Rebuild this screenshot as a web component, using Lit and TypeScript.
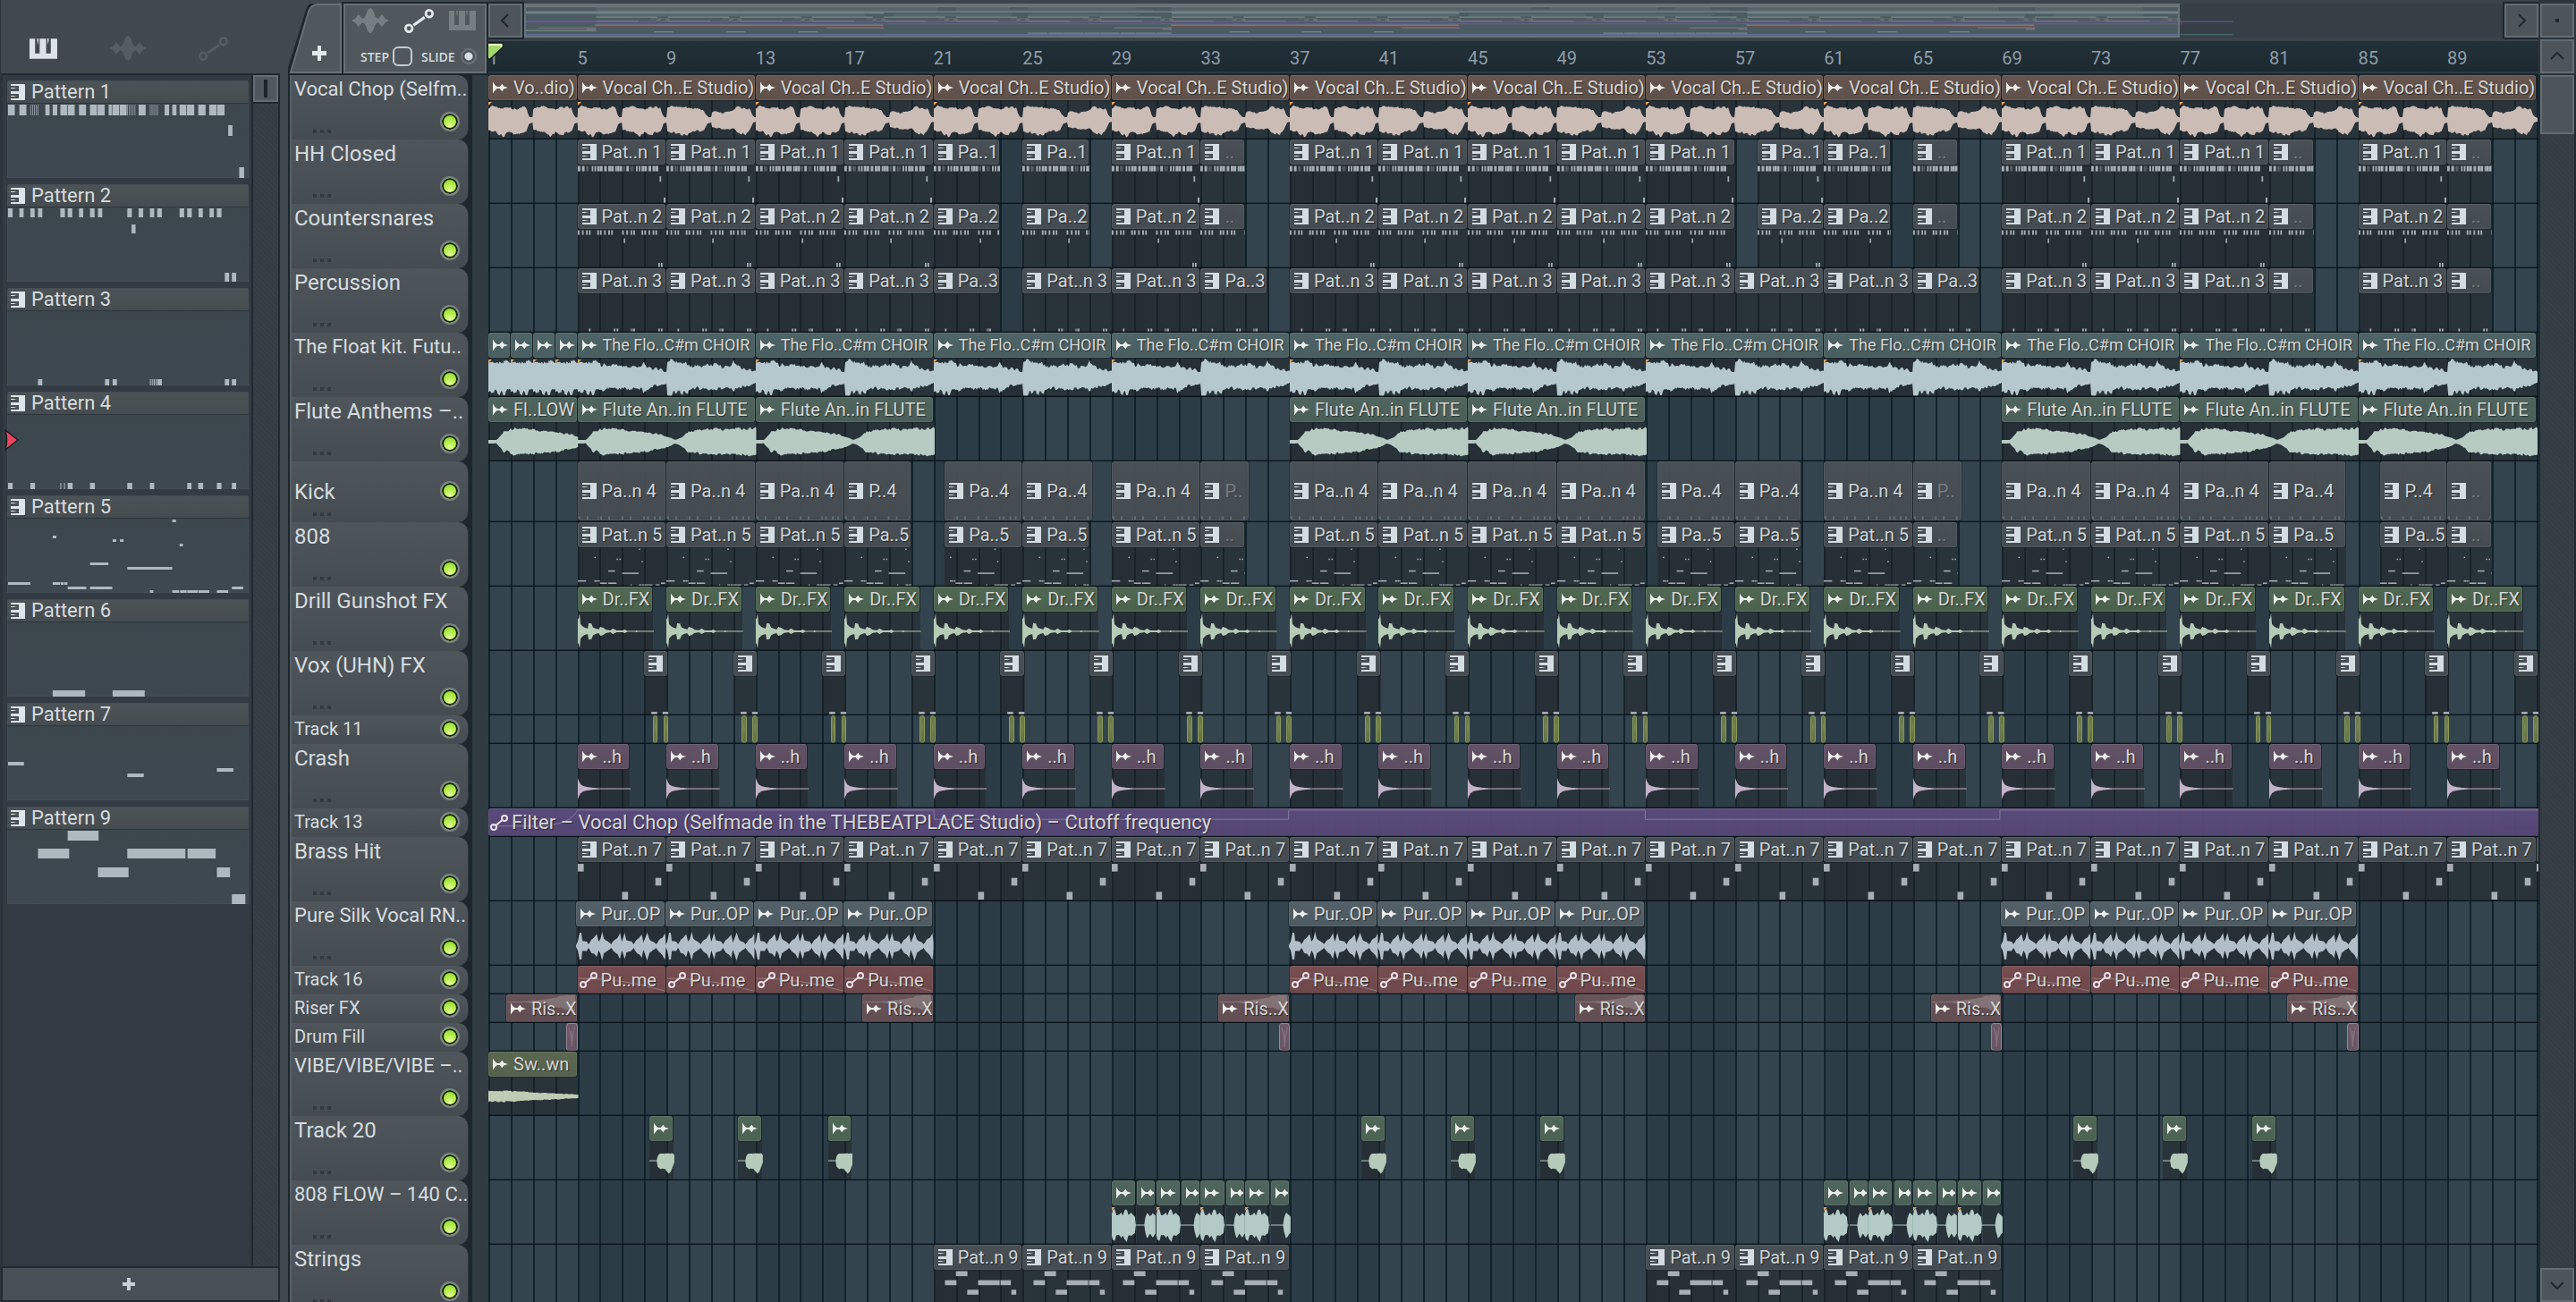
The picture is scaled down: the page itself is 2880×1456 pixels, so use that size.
import { LitElement, html, css, svg, nothing } from "lit";
import { customElement, state } from "lit/decorators.js";
import { classMap } from "lit/directives/class-map.js";
import { styleMap } from "lit/directives/style-map.js";

/* ---------- timeline geometry ---------- */
const VISIBLE_BARS = 92.095;
const BAR = 25;
const pct = (bars: number) => `${(bars / VISIBLE_BARS) * 100}%`;

/* ---------- note data: [x, width, y, height] on a 784 x 83 sheet of four bars ---------- */
type Note = [number, number, number, number];
const row = (y: number, h: number, xs: [number, number][]): Note[] =>
  xs.map(([a, b]) => [a - 23, b - a, y, h] as Note);
const thin = (from: number, to: number, y: number, h: number): Note[] => {
  const out: Note[] = [];
  for (let x = from; x < to; x += 6) out.push([x - 23, 2, y, h]);
  return out;
};

const NOTES: Record<string, Note[]> = {
  p1: [
    ...row(1, 12, [
      [23, 45], [60, 83], [145, 159], [169, 184], [194, 216], [218, 241], [255, 278],
      [291, 314], [316, 339], [352, 362], [364, 386], [388, 411], [450, 473],
      [535, 550], [560, 574], [584, 606], [608, 632], [645, 669], [681, 705], [707, 731],
    ]),
    ...thin(96, 126, 1, 12), ...thin(413, 442, 1, 12), ...thin(487, 515, 1, 12),
    ...row(24, 12, [[743, 757]]),
    ...row(71, 12, [[779, 795]]),
  ],
  p2: [
    ...row(1, 10, [
      [23, 38], [60, 74], [96, 110], [121, 135], [194, 209], [218, 233], [255, 269],
      [291, 306], [317, 331], [413, 428], [450, 465], [487, 501], [511, 526],
      [584, 599], [609, 624], [646, 660], [682, 696], [706, 721],
    ]),
    ...row(19, 10, [[427, 440]]),
    ...row(73, 10, [[732, 746], [755, 769]]),
  ],
  p3: row(76, 7, [
    [121, 135], [340, 354], [365, 379], [487, 490], [493, 496], [499, 503],
    [506, 510], [512, 526], [732, 746], [755, 769],
  ]),
  p4: row(76, 7, [
    [23, 38], [96, 111], [194, 197], [206, 209], [218, 234], [291, 307], [413, 429],
    [487, 501], [609, 623], [645, 661], [706, 721], [755, 769],
  ]),
  p5: [
    ...row(1, 3, [[560, 572]]),
    ...row(19, 3, [[169, 181]]),
    ...row(23, 3, [[365, 377], [389, 401]]),
    ...row(28, 3, [[584, 595]]),
    ...row(49, 3, [[291, 351]]),
    ...row(54, 3, [[413, 560]]),
    ...row(71, 3, [[23, 96], [169, 193], [195, 205], [207, 217]]),
    ...row(76, 3, [[218, 279], [291, 364], [755, 792]]),
    ...row(80, 3, [[487, 498], [560, 583], [586, 607], [609, 644], [646, 681], [706, 743]]),
  ],
  p6: row(76, 7, [[169, 275], [365, 470]]),
  p7: [
    ...row(40, 4, [[23, 75]]),
    ...row(53, 4, [[413, 467]]),
    ...row(47, 4, [[706, 760]]),
  ],
  p9: [
    ...row(1, 11, [[218, 319]]),
    ...row(21, 11, [[121, 223], [413, 603], [610, 702]]),
    ...row(42, 11, [[317, 417], [706, 749]]),
    ...row(72, 11, [[755, 799]]),
  ],
  brass: [
    ...row(2, 17, [[23, 75]]),
    ...row(64, 17, [[413, 465]]),
    ...row(33, 17, [[706, 758]]),
  ],
  vox: [[652, 52, 77, 6], [752, 52, 77, 6]],
};

/* ---------- audio envelopes: [x, level] key points, 25 units per bar ---------- */
type Pt = [number, number];
const ENV: Record<string, { top: Pt[]; bottom?: Pt[]; rough: number }> = {
  vocal: {
    rough: 0.16,
    top: [
      [0, 12], [4, 16], [8, 15], [13, 13], [25, 13], [31, 11], [38, 14], [42, 13], [44, 7], [46, 3], [49, 3],
      [50, 13], [59, 16], [68, 13], [75, 12], [82, 15], [92, 13], [94, 7], [97, 3], [99, 3],
      [100, 14], [112, 15], [126, 14], [140, 11], [143, 6], [146, 3], [149, 3],
      [150, 9], [162, 8], [173, 10], [178, 14], [188, 13], [192, 12], [195, 6], [197, 3], [200, 2],
    ],
    bottom: [
      [0, 12], [8, 14], [16, 18], [24, 14], [34, 16], [42, 14], [45, 5], [49, 3],
      [50, 12], [60, 13], [70, 18], [76, 13], [82, 17], [93, 12], [96, 4], [99, 3],
      [100, 12], [112, 16], [120, 17], [130, 13], [141, 12], [145, 4], [149, 3],
      [150, 8], [165, 11], [174, 10], [180, 15], [188, 16], [193, 9], [196, 3], [200, 2],
    ],
  },
  choir: {
    rough: 0.3,
    top: [
      [0, 17], [20, 17], [25, 14], [35, 12], [48, 14], [66, 12], [71, 12], [74, 18], [77, 12], [90, 9], [99, 7],
      [100, 18], [120, 17], [126, 14], [136, 12], [148, 14], [166, 12], [171, 12], [174, 18], [177, 12], [190, 9], [200, 6],
    ],
  },
  flute: {
    rough: 0.18,
    top: [
      [0, 2], [9, 2], [12, 5], [17, 11], [22, 11], [25, 14], [48, 14], [50, 16], [53, 13], [75, 11], [97, 7],
      [104, 4], [109, 2], [116, 5], [124, 12], [148, 14], [170, 14], [200, 15],
    ],
  },
  shot: {
    rough: 0.1,
    top: [
      [0, 13], [1, 15], [2, 20], [3, 8], [6, 5], [11, 3], [12, 9], [15, 9], [17, 4], [23, 2], [25, 5], [28, 4],
      [31, 2], [36, 1], [39, 3], [43, 1], [50, 1], [52, 2], [55, 0.6], [64, 0.6], [65, 1], [67, 0.5], [100, 0.5],
    ],
  },
  crash: {
    rough: 0.04,
    top: [[0, 12], [1, 9], [3, 5], [6, 3], [10, 2], [17, 1], [25, 0.5], [100, 0.5]],
  },
  silk: {
    rough: 0.12,
    top: [
      [0, 1], [2, 5], [4, 15], [6, 15], [7, 6], [12, 5], [14, 2], [17, 7], [20, 9], [23, 13], [25, 5], [27, 8],
      [29, 15], [31, 8], [37, 4], [39, 2], [42, 6], [46, 9], [49, 15], [51, 5], [54, 15], [56, 7], [62, 5],
      [64, 2], [67, 7], [70, 9], [73, 13], [75, 4], [79, 15], [82, 7], [87, 4], [89, 2], [92, 6], [96, 10], [99, 15], [100, 4],
    ],
  },
  vibe: { rough: 0.2, top: [[0, 6], [20, 6], [60, 4], [100, 2]] },
  hit: {
    rough: 0.06,
    top: [[0, 0.5], [8, 0.5], [9, 5], [11, 8], [26, 8], [28, 4]],
    bottom: [[0, 0.5], [8, 0.5], [9, 7], [12, 9], [17, 9], [21, 15], [23, 13], [27, 2]],
  },
  flow: {
    rough: 0.12,
    top: [[0, 12], [1, 17], [3, 18], [5, 11], [8, 12], [10, 14], [12, 11], [14, 17], [16, 18], [18, 11], [21, 13], [25, 9], [26, 0.5], [60, 0.5]],
  },
  flowA: { rough: 0.1, top: [[0, 0.5], [8, 0.5], [9, 8], [11, 14], [14, 10], [17, 13], [21, 9]] },
  flowB: { rough: 0.1, top: [[0, 0.5], [13, 0.5], [14, 8], [16, 14], [21, 9]] },
  riser: { rough: 0.3, top: [[0, 0.4], [20, 0.6], [40, 2], [60, 6], [70, 8], [78, 11], [80, 0.5]] },
};

const level = (pts: Pt[], x: number) => {
  for (let i = 1; i < pts.length; i++) {
    if (x <= pts[i][0]) {
      const [x0, y0] = pts[i - 1];
      const [x1, y1] = pts[i];
      return y0 + ((y1 - y0) * (x - x0)) / (x1 - x0 || 1);
    }
  }
  return pts[pts.length - 1][1];
};
const hash = (n: number) => {
  const v = Math.sin(n * 12.9898) * 43758.5453;
  return v - Math.floor(v) - 0.5;
};
const jitter = (n: number) => 0.5 * hash(n) + 0.8 * hash(Math.floor(n / 3) + 500);
const cache = new Map<string, string>();
const wavePath = (kind: string, bars: number) => {
  const key = `${kind}:${bars}`;
  const known = cache.get(key);
  if (known) return known;
  const e = ENV[kind];
  const end = bars * BAR;
  const up: string[] = [];
  const down: string[] = [];
  for (let x = 0; x <= end; x += 1) {
    const a = level(e.top, x) * (1 + e.rough * 1.2 * jitter(x + 1));
    const b = level(e.bottom ?? e.top, x) * (1 + e.rough * 1.2 * jitter(x + 77));
    up.push(`${x} ${(21 - a).toFixed(1)}`);
    down.unshift(`${x} ${(21 + b).toFixed(1)}`);
  }
  const d = `M${up.join("L")}L${down.join("L")}Z`;
  cache.set(key, d);
  return d;
};

/* ---------- arrangement ---------- */
interface Clip { at: number; len: number; text?: string; dim?: boolean; wave?: string; mark?: boolean }
interface Track {
  name: string;
  size: "tall" | "mid" | "slim";
  tight?: boolean;
  kind: "audio" | "pattern" | "auto" | "bare";
  tone: string;
  line: string;
  notes?: string;
  wave?: string;
  tightLabel?: boolean;
  clips: Clip[];
}
const every = (from: number, to: number, step: number, len: number, text?: string): Clip[] => {
  const out: Clip[] = [];
  for (let at = from; at <= to; at += step) out.push({ at, len, text });
  return out;
};
const at = (start: number, len: number, text?: string, dim = false): Clip => ({ at: start, len, text, dim });

const hats = (n: number): Clip[] => [
  ...every(4, 16, 4, 4, `Pat..n ${n}`),
  at(20, 3, `Pa..${n}`), at(24, 3, `Pa..${n}`), at(28, 4, `Pat..n ${n}`), at(32, 2, "..", true),
  ...every(36, 52, 4, 4, `Pat..n ${n}`),
  at(57, 3, `Pa..${n}`), at(60, 3, `Pa..${n}`), at(64, 2, "..", true),
  ...every(68, 76, 4, 4, `Pat..n ${n}`), at(80, 2, "..", true),
  at(84, 4, `Pat..n ${n}`), at(88, 2, "..", true),
];
const flowGroup = (b: number): Clip[] => [
  { at: b, len: 1.1, mark: true }, { at: b + 1.15, len: 0.83, wave: "flowA" },
  { at: b + 2, len: 1.1, mark: true }, { at: b + 3.15, len: 0.83, wave: "flowB" },
  { at: b + 4, len: 1.1, mark: true }, { at: b + 5.15, len: 0.83, wave: "flowA" },
  { at: b + 6, len: 1.1, mark: true }, { at: b + 7.15, len: 0.85, wave: "flowB" },
];
const marked = (list: Clip[]) => list.map((c) => ({ ...c, mark: true }));
const PAT = { tone: "#4a5156", line: "#a7afb4" };

const TRACKS: Track[] = [
  {
    name: "Vocal Chop (Selfm..", size: "tall", tight: true, kind: "audio", tone: "#68574f", line: "#cbbcb5", wave: "vocal",
    clips: marked([at(0, 4, "Vo..dio)"), ...every(4, 84, 8, 8, "Vocal Ch..E Studio)")]),
  },
  { name: "HH Closed", size: "tall", kind: "pattern", ...PAT, notes: "p1", clips: hats(1) },
  { name: "Countersnares", size: "tall", kind: "pattern", ...PAT, notes: "p2", clips: hats(2) },
  {
    name: "Percussion", size: "tall", kind: "pattern", ...PAT, notes: "p3",
    clips: [
      ...every(4, 16, 4, 4, "Pat..n 3"), at(20, 3, "Pa..3"), ...every(24, 28, 4, 4, "Pat..n 3"), at(32, 3, "Pa..3"),
      ...every(36, 60, 4, 4, "Pat..n 3"), at(64, 3, "Pa..3"), ...every(68, 76, 4, 4, "Pat..n 3"),
      at(80, 2, "..", true), at(84, 4, "Pat..n 3"), at(88, 2, "..", true),
    ],
  },
  {
    name: "The Float kit. Futu..", size: "tall", tight: true, kind: "audio", tone: "#506668", line: "#b5c8ce", wave: "choir", tightLabel: true,
    clips: marked([...every(0, 3, 1, 1), ...every(4, 84, 8, 8, "The Flo..C#m CHOIR")]),
  },
  {
    name: "Flute Anthems –..", size: "tall", kind: "audio", tone: "#51675f", line: "#b7cbc3", wave: "flute",
    clips: [
      at(0, 4, "Fl..LOW"), ...every(4, 12, 8, 8, "Flute An..in FLUTE"),
      ...every(36, 44, 8, 8, "Flute An..in FLUTE"), ...every(68, 84, 8, 8, "Flute An..in FLUTE"),
    ],
  },
  {
    name: "Kick", size: "mid", kind: "pattern", ...PAT, notes: "p4",
    clips: [
      ...every(4, 12, 4, 4, "Pa..n 4"), at(16, 3, "P..4"), at(20.5, 3.5, "Pa..4"), at(24, 3.15, "Pa..4"),
      at(28, 4, "Pa..n 4"), at(32, 2.2, "P..", true), ...every(36, 48, 4, 4, "Pa..n 4"),
      at(52.5, 3.5, "Pa..4"), at(56, 3, "Pa..4"), at(60, 4, "Pa..n 4"), at(64, 2.2, "P..", true),
      ...every(68, 76, 4, 4, "Pa..n 4"), at(80, 3.45, "Pa..4"), at(85, 3, "P..4"), at(88, 2, "..", true),
    ],
  },
  {
    name: "808", size: "tall", kind: "pattern", ...PAT, notes: "p5",
    clips: [
      ...every(4, 12, 4, 4, "Pat..n 5"), at(16, 3, "Pa..5"), at(20.5, 3.5, "Pa..5"), at(24, 3, "Pa..5"),
      at(28, 4, "Pat..n 5"), at(32, 2, "..", true), ...every(36, 48, 4, 4, "Pat..n 5"),
      at(52.5, 3.5, "Pa..5"), at(56, 3, "Pa..5"), at(60, 4, "Pat..n 5"), at(64, 2, "..", true),
      ...every(68, 76, 4, 4, "Pat..n 5"), at(80, 3.45, "Pa..5"), at(85, 3, "Pa..5"), at(88, 2, "..", true),
    ],
  },
  { name: "Drill Gunshot FX", size: "tall", kind: "audio", tone: "#526a52", line: "#b6cab5", wave: "shot", clips: every(4, 88, 4, 3.4, "Dr..FX") },
  { name: "Vox (UHN) FX", size: "tall", kind: "pattern", ...PAT, notes: "vox", clips: every(7, 91, 4, 1.09) },
  {
    name: "Track 11", size: "slim", kind: "bare", tone: "#6d7a48", line: "#8a9a5c",
    clips: [...every(7.38, 92, 4, 0.23), ...every(7.86, 92, 4, 0.23)],
  },
  { name: "Crash", size: "tall", kind: "audio", tone: "#655368", line: "#c3b3c8", wave: "crash", clips: every(4, 88, 4, 2.36, "..h") },
  {
    name: "Track 13", size: "slim", kind: "auto", tone: "#5b4b7d", line: "#9a8bba",
    clips: [at(0, 92.2, "Filter – Vocal Chop (Selfmade in the THEBEATPLACE Studio) – Cutoff frequency")],
  },
  { name: "Brass Hit", size: "tall", kind: "pattern", ...PAT, notes: "brass", clips: [...every(4, 88, 4, 4, "Pat..n 7"), at(92, 0.2)] },
  {
    name: "Pure Silk Vocal RN..", size: "tall", tight: true, kind: "audio", tone: "#55626a", line: "#b2bfc8", wave: "silk",
    clips: [...every(3.95, 15.95, 4, 4, "Pur..OP"), ...every(35.95, 47.95, 4, 4, "Pur..OP"), ...every(67.95, 79.95, 4, 4, "Pur..OP")],
  },
  {
    name: "Track 16", size: "slim", kind: "auto", tone: "#7a4e51", line: "#c08a8c",
    clips: [...every(4, 16, 4, 4, "Pu..me"), ...every(36, 48, 4, 4, "Pu..me"), ...every(68, 80, 4, 4, "Pu..me")],
  },
  {
    name: "Riser FX", size: "slim", kind: "audio", tone: "#6b5459", line: "#b59aa0", wave: "riser",
    clips: [0.8, 16.8, 32.8, 48.8, 64.8, 80.8].map((b) => at(b, 3.2, "Ris..X")),
  },
  {
    name: "Drum Fill", size: "slim", kind: "bare", tone: "#6e5a69", line: "#9b8394",
    clips: [3.5, 35.5, 67.5, 83.5].map((b) => at(b, 0.5)),
  },
  { name: "VIBE/VIBE/VIBE –..", size: "tall", tight: true, kind: "audio", tone: "#5d6a52", line: "#bfccb4", wave: "vibe", clips: [at(0, 4, "Sw..wn")] },
  {
    name: "Track 20", size: "tall", kind: "audio", tone: "#526a59", line: "#b6cab9", wave: "hit",
    clips: [7.22, 11.23, 15.25, 39.22, 43.23, 47.25, 71.22, 75.23, 79.25].map((b) => at(b, 1.08)),
  },
  {
    name: "808 FLOW – 140 C..", size: "tall", tight: true, kind: "audio", tone: "#51685f", line: "#b3cac6", wave: "flow",
    clips: [...flowGroup(28), ...flowGroup(60)],
  },
  {
    name: "Strings", size: "tall", kind: "pattern", ...PAT, notes: "p9",
    clips: [...every(20, 32, 4, 4, "Pat..n 9"), ...every(52, 64, 4, 4, "Pat..n 9")],
  },
];

/* ---------- glyphs ---------- */
const pianoGlyph = (cls: string) => html`<svg class=${cls} viewBox="0 0 30 22" aria-hidden="true">
  <path fill="currentColor" d="M0 0H6V16H11V0H18V16H23V0H30V22H0Z" />
  <path fill="currentColor" d="M8 0H10L9 7Z M19 0H21L20 7Z" />
</svg>`;
const waveGlyph = (cls: string) => html`<svg class=${cls} viewBox="0 0 42 28" aria-hidden="true">
  <path
    fill="currentColor"
    d="M0 14L4 12L8 7L12 12L14 11Q16 9 17 5Q19 0 21 0Q23 0 25 5Q26 9 28 11L30 12L34 7L38 12L42 14L38 16L34 21L30 16L28 17Q26 19 25 23Q23 28 21 28Q19 28 17 23Q16 19 14 17L12 16L8 21L4 16Z"
  />
</svg>`;
const linkGlyph = (cls: string) => html`<svg class=${cls} viewBox="0 0 32 26" aria-hidden="true">
  <g fill="none" stroke="currentColor">
    <circle cx="5" cy="21" r="3.7" stroke-width="2.6" />
    <circle cx="27" cy="5" r="3.7" stroke-width="2.6" />
    <path d="M10 17.5L22 9" stroke-width="3" />
  </g>
</svg>`;
const keysGlyph = html`<svg class="g-keys" viewBox="0 0 16 18" aria-hidden="true">
  <path fill="currentColor" d="M0 0H16V18H0V16H9V11H0V8H9V2H0Z" />
  <path fill="currentColor" d="M0 4H3L7 5H0Z M0 13H3L7 14H0Z" />
</svg>`;
const clipWaveGlyph = html`<svg class="g-clipwave" viewBox="0 0 18 14" aria-hidden="true">
  <path fill="currentColor" d="M0 0Q2 4 5 6H8L11 2.5L13 5.5L18 7L13 8.5L11 11.5L8 8H5Q2 10 0 14Z" />
</svg>`;
const clipLinkGlyph = html`<svg class="g-cliplink" viewBox="0 0 20 18" aria-hidden="true">
  <g fill="none" stroke="currentColor" stroke-width="2">
    <circle cx="4" cy="14" r="3" />
    <circle cx="16" cy="4" r="3" />
    <path d="M7 11.5L13 6.5" />
  </g>
</svg>`;

const noteSheet = (notes: Note[], x: number, w: number, cls: string) => html`<svg
  class=${cls}
  viewBox="${x} 0 ${w} 83"
  preserveAspectRatio="none"
  aria-hidden="true"
>
  ${notes.map((n) => svg`<rect x=${n[0]} y=${n[2]} width=${n[1]} height=${n[3]} fill="currentColor" />`)}
</svg>`;

/* ---------- pattern picker ---------- */
@customElement("pattern-picker")
export class PatternPicker extends LitElement {
  static styles = css`
    :host { display: flex; flex-direction: column; width: 322px; height: 100%; background: #41494f; color: #d6dcdf; font-family: Roboto, sans-serif; box-sizing: border-box; border-left: 1px solid #2c353b; }
    button { border: 0; padding: 0; background: none; color: inherit; font: inherit; display: block; }
    .tabs { display: flex; align-items: center; height: 82px; padding: 26px 0 0 32px; box-sizing: border-box; gap: 58px; }
    .tabs button { color: #545d62; }
    .tabs .on { color: #dde3e6; }
    .t-keys { width: 31px; height: 23px; display: block; }
    .t-wave { width: 42px; height: 28px; display: block; }
    .t-link { width: 33px; height: 27px; display: block; }
    .frame { display: flex; flex: 1; min-height: 0; margin-right: 9px; border: 2px solid #1f292f; border-left-color: #29343a; background: #323b43; }
    .list { flex: 1; min-width: 0; margin: 0; padding: 6px 3px 0 5px; list-style: none; display: flex; flex-direction: column; gap: 7px; }
    .item { position: relative; }
    .head { display: flex; align-items: center; gap: 7px; width: 100%; height: 26px; padding-left: 3px; border: 1px solid #464e53; border-bottom-color: #2b353b; border-radius: 2px; box-sizing: border-box; background: linear-gradient(#4b5357, #454c50); font-size: 22px; line-height: 24px; text-align: left; }
    .g-keys { width: 16px; height: 18px; display: block; color: #dbe5ea; }
    .sheet { height: 83px; border: 1px solid #434d55; border-top: 0; box-sizing: border-box; background: linear-gradient(#3c464d, #3e4850); color: #adb8bf; }
    .notes { width: 100%; height: 83px; display: block; }
    .here { position: absolute; left: -3px; top: 42px; width: 16px; height: 24px; }
    .bar { width: 28px; border-left: 2px solid #1f292f; background: repeating-linear-gradient(45deg, #373f46 0 2px, #343c43 2px 4px); }
    .thumb { height: 30px; border: 2px solid #646d73; box-sizing: border-box; background: #50585e; display: flex; justify-content: center; align-items: center; box-shadow: 0 2px 0 #1f292f; }
    .grip { width: 4px; height: 20px; background: #1c252b; }
    .add { height: 38px; margin-right: 9px; padding-right: 26px; display: flex; align-items: center; justify-content: center; background: #485056; color: #c9d0d4; border: 2px solid #1f292f; border-top: 0; box-sizing: border-box; }
    .plus { width: 14px; height: 14px; display: block; }
  `;
  @state() private current = 3;
  render() {
    return html`
      <div class="tabs">
        <button class="on" aria-label="Patterns">${pianoGlyph("t-keys")}</button>
        <button aria-label="Audio clips">${waveGlyph("t-wave")}</button>
        <button aria-label="Automation clips">${linkGlyph("t-link")}</button>
      </div>
      <div class="frame">
        <ul class="list">
          ${[1, 2, 3, 4, 5, 6, 7, 9].map(
            (n, i) => html`<li class="item">
              <button class="head" @click=${() => (this.current = i)}>${keysGlyph}<span>Pattern ${n}</span></button>
              <div class="sheet">${noteSheet(NOTES[`p${n}`], 0, 784, "notes")}</div>
              ${i === this.current
                ? html`<svg class="here" viewBox="0 0 16 24" aria-hidden="true">
                    <path d="M1 1Q4 12 1 23L15 12Z" fill="#ea4660" stroke="#171c20" stroke-width="1.5" stroke-linejoin="round" />
                  </svg>`
                : nothing}
            </li>`
          )}
        </ul>
        <div class="bar"><div class="thumb"><div class="grip"></div></div></div>
      </div>
      <button class="add" aria-label="Add pattern">
        <svg class="plus" viewBox="0 0 14 14"><path d="M5 0H9V5H14V9H9V14H5V9H0V5H5Z" fill="currentColor" /></svg>
      </button>
    `;
  }
}

/* ---------- playlist ---------- */
@customElement("play-list")
export class PlayList extends LitElement {
  static styles = css`
    :host { flex: 1; min-width: 0; height: 100%; display: grid; grid-template-columns: 224px minmax(0, 1fr) 42px; grid-template-rows: 84px minmax(0, 1fr); background: #1c272d; color: #d6dcdf; font-family: Roboto, sans-serif; }
    button { border: 0; padding: 0; background: none; color: inherit; font: inherit; display: block; }
    svg { display: block; }

    .corner { display: flex; gap: 2px; padding-top: 4px; box-sizing: border-box; background: #41494f; border-bottom: 2px solid #1c272d; }
    .newtab { width: 60px; height: 78px; }
    .tools { width: 160px; height: 78px; box-sizing: border-box; border: 2px solid #687076; background: #50585e; box-shadow: 0 0 0 2px #1c272d; display: flex; flex-direction: column; padding: 3px 10px 0 7px; gap: 15px; }
    .modes { display: flex; justify-content: space-between; align-items: center; height: 28px; color: #767e81; }
    .modes .on { color: #e3e8ea; }
    .m-wave { width: 42px; height: 28px; }
    .m-link { width: 33px; height: 27px; }
    .m-keys { width: 30px; height: 22px; }
    .opts { display: flex; align-items: center; height: 22px; padding-left: 10px; gap: 10px; font: 600 14px "Open Sans", sans-serif; }
    .opt { display: flex; align-items: center; gap: 4px; }
    .step { appearance: none; width: 22px; height: 22px; margin: 0; border: 2px solid #c5cccf; border-radius: 6px; box-sizing: border-box; }
    .slide { appearance: none; width: 18px; height: 18px; margin: 0 0 0 2px; border: 2px solid #6d757a; border-radius: 50%; box-sizing: border-box; background: radial-gradient(circle, #d8dfe2 0 4px, #4c5459 5px); }

    .top { display: flex; flex-direction: column; min-width: 0; }
    .overview { display: flex; height: 46px; padding: 4px 0; box-sizing: border-box; background: #3b444a; border-top: 0; }
    .sq { width: 38px; height: 38px; flex: none; border: 2px solid #636c72; box-sizing: border-box; background: #4d555b; color: #1f282e; display: grid; place-items: center; box-shadow: 0 0 0 2px #1c272d; }
    .chev { width: 18px; height: 18px; }
    .map { flex: 1; min-width: 0; position: relative; height: 38px; background: #363f45; margin: 0 2px; }
    .mapsvg { width: 100%; height: 38px; }
    .view { position: absolute; left: 0; top: 0; height: 38px; width: 83.7%; box-sizing: border-box; border: 2px solid #69737a; }
    .ruler { position: relative; height: 38px; box-sizing: border-box; border-bottom: 2px solid #1a252b; background: linear-gradient(#223038, #1d2930 34px, #2b3a42 34px); display: grid; grid-template-columns: repeat(23, minmax(0, 4fr)) minmax(0, 0.095fr); font-size: 20px; line-height: 38px; color: #8d9da7; overflow: hidden; }
    .playhead { position: absolute; left: 0; top: 1px; width: 18px; height: 20px; }

    .side { display: flex; flex-direction: column; gap: 2px; padding: 4px 2px 0; align-items: flex-start; background: #2b353b; }
    .side .sq { box-shadow: none; }

    .names { overflow: hidden; display: flex; flex-direction: column; background: linear-gradient(90deg, #1c272d 204px, #303b42 204px 222px, #1c272d 222px); padding-right: 2px; border-left: 2px solid #1c272d; box-sizing: border-box; min-height: 0; }
    .name { flex: none; width: 200px; box-sizing: border-box; position: relative; display: flex; padding: 1px 0 0 3px; border-left: 2px solid #565f64; border-right: 1px solid #2c363b; border-radius: 0 12px 12px 0; background: linear-gradient(#4f565b, #454c51); white-space: nowrap; font-size: 24px; line-height: 30px; }
    .name.tight { font-size: 22px; }
    .tall { height: 72px; }
    .mid { height: 68px; }
    .slim { height: 32px; }
    .name.mid { align-items: center; padding-top: 0; }
    .name.slim { font-size: 20px; padding-top: 0; }
    .led { appearance: none; position: absolute; right: 9px; width: 22px; height: 22px; margin: 0; border-radius: 50%; border: 2px solid #7d8689; box-sizing: border-box; background: radial-gradient(circle at 50% 80%, #e6fba0 0, #bdf155 35%, #96de33 70%, #7cc723 100%); box-shadow: inset 0 0 0 2px #17230c; bottom: 9px; }
    .mid .led { bottom: 24px; }
    .slim .led { bottom: 6px; }
    .dots { position: absolute; left: 24px; bottom: 7px; width: 20px; height: 4px; background: repeating-linear-gradient(90deg, #33393e 0 4px, transparent 4px 8px); }

    .lanes { position: relative; overflow: hidden; min-height: 0; background: #30404a; }
    .grid { position: absolute; inset: 0; display: grid; grid-template-columns: repeat(92, minmax(0, 1fr)) minmax(0, 0.095fr); }
    .cell { border-left: 2px solid #10232c; background: #2c3c46; }
    .cell.lit { background: #33444e; }
    .lane { position: relative; box-sizing: border-box; }
    .lane::after { content: ""; position: absolute; left: 0; right: 0; bottom: 0; height: 2px; background: linear-gradient(rgba(5, 18, 26, 0.35) 1px, rgba(3, 12, 18, 0.85) 1px); }
    .clip { position: absolute; top: 0; bottom: 0; background: rgba(32, 34, 38, 0.5); }
    .clip.whole { background: none; }
    .bar { position: relative; display: flex; align-items: center; gap: 6px; height: 28px; margin-right: 1px; padding-left: 4px; box-sizing: border-box; border: 1px solid rgba(255, 255, 255, 0.06); border-top-color: rgba(255, 255, 255, 0.12); border-radius: 3px; box-shadow: 0 0 0 1px rgba(16, 24, 29, 0.45); overflow: hidden; white-space: nowrap; font-size: 20px; line-height: 24px; color: #d3dade; opacity: 0.97; }
    .bar.warm { color: #dcdcda; }
    .bar.long { font-size: 22px; }
    .bar.small { font-size: 18px; }
    .fill .bar { height: 66px; }
    .slimclip .bar { height: 31px; }
    .lbl { position: relative; text-shadow: 1px 1px 1px rgba(10, 16, 20, 0.6); }
    .lbl.dim { opacity: 0.35; }
    .g-keys { flex: none; width: 16px; height: 18px; color: #d9e3e8; position: relative; }
    .g-clipwave { flex: none; width: 17px; height: 14px; color: #f3f4f0; position: relative; }
    .g-cliplink { flex: none; width: 20px; height: 18px; color: #f0e6ee; position: relative; }
    .auto .bar { padding-left: 1px; gap: 4px; }
    .shape { width: 100%; height: 42px; margin-top: 1px; }
    .wave { width: calc(100% + 1px); }
    .under { position: absolute; left: 0; bottom: 0; width: 100%; height: 43px; opacity: 0.25; }
    .curve { position: absolute; inset: 0; width: 100%; height: 100%; opacity: 0.35; }
    .tick { position: absolute; left: 0; top: 30px; width: 0; height: 0; border-top: 4px solid #e9a560; border-right: 4px solid transparent; }
    .stub { height: 31px; box-sizing: border-box; border: 1px solid; border-radius: 3px; }
    .ripple { width: 100%; height: 29px; }

    .rail { display: flex; flex-direction: column; padding: 0 2px; background: repeating-linear-gradient(45deg, #373f46 0 2px, #343c43 2px 4px) content-box, #1f292f; min-height: 0; }
    .grab { height: 66px; border: 2px solid #636c72; box-sizing: border-box; background: #4d555b; }
    .space { flex: 1; }
    .rail .sq { box-shadow: none; }
  `;
  @state() private stepOn = false;
  @state() private slideOn = true;

  private overview() {
    const strength = { audio: 0.4, pattern: 0.14, auto: 0.7, bare: 0.6 };
    return html`<svg class="mapsvg" viewBox="0 0 110 38" preserveAspectRatio="none" aria-hidden="true">
      <rect x="0" y="0" width="92" height="38" fill="#4c5b62" />
      ${TRACKS.map((t, i) =>
        t.clips.map(
          (c) =>
            svg`<rect x=${c.at} y=${2.5 + i * 1.5} width=${c.len} height="1.3" fill=${t.kind === "auto" ? t.tone : t.line} opacity=${strength[t.kind]} />`
        )
      )}
      <rect x="0" y="34" width="92" height="1.6" fill="#5c76a0" opacity="0.8" />
      <rect x="0" y="19.500" width="95" height="1.2" fill="#7667a0" opacity="0.7" />
      <rect x="92" y="34" width="3" height="1.2" fill="#4c7a78" opacity="0.7" />
    </svg>`;
  }

  private body(t: Track, c: Clip) {
    if (t.kind === "pattern") {
      return noteSheet(NOTES[t.notes!], (c.at % 4) * 196, c.len * 196, t.size === "mid" ? "under" : "shape");
    }
    const wave = c.wave ?? t.wave!;
    return html`<svg
      class=${t.size === "slim" ? "under" : "shape wave"}
      viewBox="0 0 ${c.len * BAR} 42"
      preserveAspectRatio="none"
      aria-hidden="true"
    >
      <path d=${wavePath(wave, c.len)} fill="currentColor" />
    </svg>`;
  }

  private clip(t: Track, c: Clip) {
    const box = styleMap({ left: pct(c.at), width: pct(c.len), color: t.line });
    const paint = styleMap({ background: `linear-gradient(${t.tone}, color-mix(in srgb, ${t.tone} 90%, #20282c))` });
    if (t.kind === "bare") {
      return html`<div class="clip whole" style=${box}>
        <div class="stub" style=${paint}>
          <svg class="ripple" viewBox="0 0 10 29" preserveAspectRatio="none">
            <path d="M2 4Q5 14 5 24Q6 14 8 4M5 8V26" fill="none" stroke="currentColor" stroke-width="1.2" opacity="0.5" />
          </svg>
        </div>
      </div>`;
    }
    const glyph = t.kind === "pattern" ? keysGlyph : t.kind === "auto" ? clipLinkGlyph : clipWaveGlyph;
    const inside = t.size !== "tall";
    return html`<div
      class=${classMap({ clip: true, whole: inside, fill: t.size === "mid", slimclip: t.size === "slim", auto: t.kind === "auto" })}
      style=${box}
    >
      <div class=${classMap({ bar: true, warm: t.kind !== "pattern", long: c.len > 10, small: !!t.tightLabel })} style=${paint}>
        ${inside && t.kind !== "auto" ? this.body(t, c) : nothing}
        ${t.kind === "auto"
          ? html`<svg class="curve" viewBox="0 0 100 31" preserveAspectRatio="none" aria-hidden="true">
              <path
                d=${c.len > 10 ? "M0 20H2.500Q4 18 4.300 1H21.700V12H39V1H56.400V12H73.700V1H100" : "M0 14Q50 14 100 29"}
                fill="none"
                stroke="currentColor"
                vector-effect="non-scaling-stroke"
              />
            </svg>`
          : nothing}
        ${glyph}${c.text ? html`<span class=${classMap({ lbl: true, dim: !!c.dim })}>${c.text}</span>` : nothing}
      </div>
      ${inside ? nothing : this.body(t, c)}
      ${c.mark ? html`<span class="tick"></span>` : nothing}
    </div>`;
  }

  render() {
    const bars = Array.from({ length: 92 }, (_, i) => i);
    return html`
      <div class="corner">
        <button class="newtab" aria-label="Add track">
          <svg viewBox="0 0 60 78" width="60" height="78" aria-hidden="true">
            <path d="M0 80V72L20 7Q23 -2 31 -2H60V80Z" fill="#1c272d" />
            <path d="M3 77L23 9Q26 1 33 1H59V77Z" fill="#50585e" stroke="#687076" stroke-width="2" />
            <path d="M33 47H37V53H43V58H37V64H33V58H27V53H33Z" fill="#e3e8ea" />
          </svg>
        </button>
        <div class="tools">
          <div class="modes">
            <button aria-label="Audio mode">${waveGlyph("m-wave")}</button>
            <button class="on" aria-label="Automation mode">${linkGlyph("m-link")}</button>
            <button aria-label="Pattern mode">${pianoGlyph("m-keys")}</button>
          </div>
          <div class="opts">
            <label class="opt">STEP
              <input class="step" type="checkbox" .checked=${this.stepOn} @change=${() => (this.stepOn = !this.stepOn)} />
            </label>
            <label class="opt">SLIDE
              <input class="slide" type="checkbox" .checked=${this.slideOn} @change=${() => (this.slideOn = !this.slideOn)} />
            </label>
          </div>
        </div>
      </div>

      <div class="top">
        <div class="overview">
          <button class="sq" aria-label="Scroll left">
            <svg class="chev" viewBox="0 0 18 18"><path d="M12 2L5 9L12 16" fill="none" stroke="currentColor" stroke-width="2" /></svg>
          </button>
          <div class="map">${this.overview()}<div class="view"></div></div>
          <button class="sq" aria-label="Scroll right">
            <svg class="chev" viewBox="0 0 18 18"><path d="M6 2L13 9L6 16" fill="none" stroke="currentColor" stroke-width="2" /></svg>
          </button>
        </div>
        <div class="ruler">
          ${Array.from({ length: 23 }, (_, i) => html`<span>${i * 4 + 1}</span>`)}
          <svg class="playhead" viewBox="0 0 18 20" aria-hidden="true">
            <path d="M-1 1H16V6L2 19H-1Z" fill="#a4d86a" stroke="#121a1e" stroke-width="1.5" />
            <path d="M0 3H14.500V5.500" fill="none" stroke="#eef9c8" stroke-width="2" />
          </svg>
        </div>
      </div>

      <div class="side">
        <button class="sq" aria-label="Zoom">
          <svg class="chev" viewBox="0 0 18 18"><rect x="7" y="7" width="4" height="4" fill="currentColor" /></svg>
        </button>
        <button class="sq" aria-label="Scroll up">
          <svg class="chev" viewBox="0 0 18 18"><path d="M2 12L9 5L16 12" fill="none" stroke="currentColor" stroke-width="2" /></svg>
        </button>
      </div>

      <div class="names">
        ${TRACKS.map(
          (t) => html`<div class=${classMap({ name: true, [t.size]: true, tight: !!t.tight })}>
            <span>${t.name}</span>
            ${t.size === "slim" ? nothing : html`<span class="dots"></span>`}
            <input class="led" type="checkbox" checked aria-label="Enable ${t.name}" />
          </div>`
        )}
      </div>

      <div class="lanes">
        <div class="grid">
          ${bars.map((b) => html`<div class=${classMap({ cell: true, lit: Math.floor(b / 4) % 2 === 0 })}></div>`)}
          <div class="cell lit"></div>
        </div>
        ${TRACKS.map((t) => html`<div class="lane ${t.size}">${t.clips.map((c) => this.clip(t, c))}</div>`)}
      </div>

      <div class="rail">
        <div class="grab"></div>
        <div class="space"></div>
        <button class="sq" aria-label="Scroll down">
          <svg class="chev" viewBox="0 0 18 18"><path d="M2 6L9 13L16 6" fill="none" stroke="currentColor" stroke-width="2" /></svg>
        </button>
      </div>
    `;
  }
}

@customElement("app-root")
export class AppRoot extends LitElement {
  static styles = css`
    :host { display: flex; height: 100vh; overflow: hidden; background: #41494f; }
  `;
  render() {
    return html`<pattern-picker></pattern-picker><play-list></play-list>`;
  }
}
